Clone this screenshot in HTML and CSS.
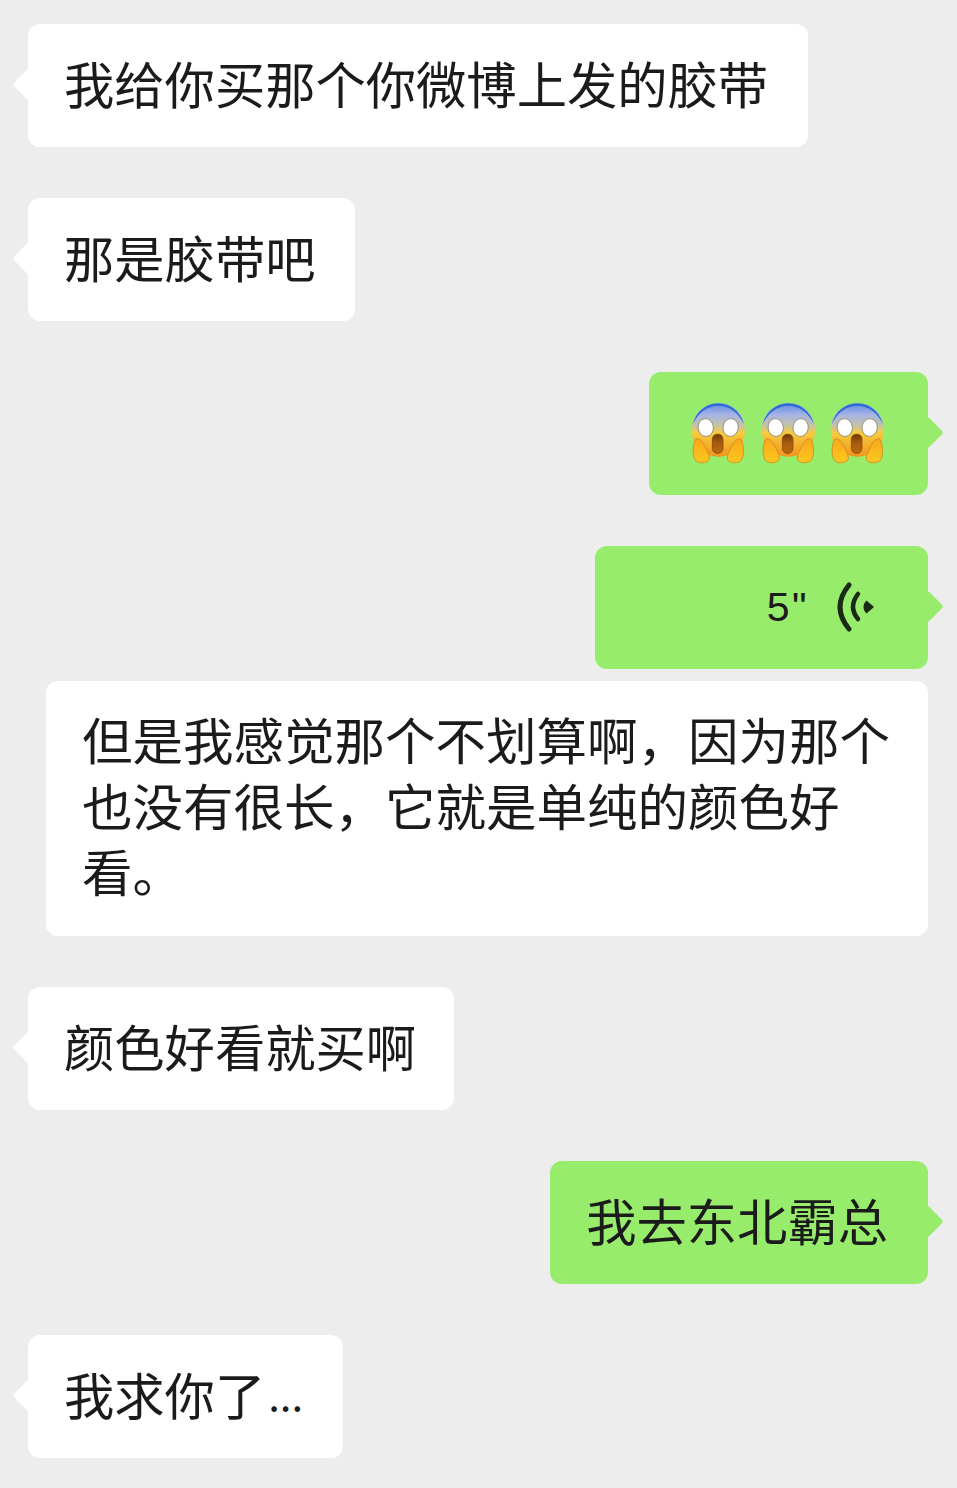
FILE: index.html
```html
<!DOCTYPE html>
<html lang="zh-CN">
<head>
  <meta charset="UTF-8">
  <title>聊天记录</title>
  <link rel="stylesheet" href="styles.css">
</head>
<body>
  <svg class="defs" width="0" height="0">
    <defs>
      <linearGradient id="face" x1="0" y1="0" x2="0" y2="1">
        <stop offset="0" stop-color="#5f86e2"/>
        <stop offset="0.22" stop-color="#a6b4e6"/>
        <stop offset="0.42" stop-color="#c4c3a6"/>
        <stop offset="0.56" stop-color="#f6cb3e"/>
        <stop offset="1" stop-color="#f2941c"/>
      </linearGradient>
      <linearGradient id="hand" x1="0" y1="0" x2="0" y2="1">
        <stop offset="0" stop-color="#f7a81e"/>
        <stop offset="1" stop-color="#fdc81e"/>
      </linearGradient>
      <linearGradient id="mouth" x1="0" y1="0" x2="0" y2="1">
        <stop offset="0" stop-color="#6f3a08"/>
        <stop offset="0.45" stop-color="#a85a10"/>
        <stop offset="1" stop-color="#b8690f"/>
      </linearGradient>
      <!-- drawn at 3x, same scale as the zoomed crop -->
      <symbol id="scream" viewBox="18 20 174 190">
        <circle cx="103" cy="107" r="81" fill="url(#face)"/>
        <path d="M26 90C36 50 68 28 103 28C138 28 170 50 180 90C166 58 138 34 103 34C68 34 40 58 26 90z" fill="#2a6ad2"/>
        <ellipse cx="65" cy="100" rx="23" ry="27" fill="#fff" stroke="#8c8474" stroke-width="2.5" transform="rotate(-8 65 100)"/>
        <ellipse cx="140" cy="100" rx="23" ry="27" fill="#fff" stroke="#8c8474" stroke-width="2.5" transform="rotate(8 140 100)"/>
        <rect x="85" y="120" width="32" height="58" rx="15" fill="url(#mouth)" stroke="#8a4a0a" stroke-width="2.5"/>
        <path d="M34 136C25 154 24 184 34 199C42 209 68 209 75 197C79 187 70 172 64 160C58 146 46 128 34 136z" fill="url(#hand)" stroke="#d0861a" stroke-width="2.5"/>
        <path d="M172 136C181 154 182 184 172 199C164 209 138 209 131 197C127 187 136 172 142 160C148 146 160 128 172 136z" fill="url(#hand)" stroke="#d0861a" stroke-width="2.5"/>
      </symbol>
    </defs>
  </svg>

  <div class="chat">
    <div class="bubble them">我给你买那个你微博上发的胶带</div>
    <div class="bubble them">那是胶带吧</div>
    <div class="bubble me emojis">
      <svg class="emoji"><use href="#scream"/></svg>
      <svg class="emoji"><use href="#scream"/></svg>
      <svg class="emoji"><use href="#scream"/></svg>
    </div>
    <div class="voice-group">
      <div class="bubble me voice">
        <span class="secs">5"</span>
        <svg class="wave" width="38" height="50" viewBox="0 0 38 50">
          <path d="M12 3Q-6 25 12 47" fill="none" stroke="#1a2a14" stroke-width="5" stroke-linecap="round"/>
          <path d="M21 12Q11 25 21 37" fill="none" stroke="#1a2a14" stroke-width="4.5" stroke-linecap="round"/>
          <path d="M29.5 18.5L37 25L29.5 31.5C25.5 28 25.5 22 29.5 18.5z" fill="#1a2a14"/>
        </svg>
      </div>
      <div class="translation">但是我感觉那个不划算啊，因为那个也没有很长，它就是单纯的颜色好看。</div>
    </div>
    <div class="bubble them tight">颜色好看就买啊</div>
    <div class="bubble me">我去东北霸总</div>
    <div class="bubble them">我求你了<span class="dots">...</span></div>
  </div>
</body>
</html>
```

FILE: styles.css
```css
* {
  margin: 0;
  padding: 0;
  box-sizing: border-box;
}
html, body {
  height: 100%;
}
body {
  background-color: #ededed;
  color: #1b1b1b;
  font-family: "Noto Sans CJK SC", "Liberation Sans", sans-serif;
  font-size: 50.3px;
  overflow: hidden;
}
.defs {
  display: block;
}
.chat {
  display: flex;
  flex-direction: column;
  gap: 51px;
  padding: 24px 29px 0 28px;
}
.bubble {
  position: relative;
  height: 123px;
  padding: 0 40px 8px 36px;
  border-radius: 12px;
  display: flex;
  align-items: center;
  line-height: 66px;
  white-space: nowrap;
}
.bubble::before {
  content: "";
  position: absolute;
  top: 50%;
  width: 23px;
  height: 23px;
  margin-top: -13px;
  border-radius: 3px;
  background-color: inherit;
  transform: rotate(45deg);
}
.them {
  align-self: flex-start;
  background-color: #fff;
}
.them::before {
  left: -11px;
}
.me {
  align-self: flex-end;
  background-color: #98ec6c;
}
.me::before {
  right: -11px;
}
.tight {
  padding-right: 38px;
}
.emojis {
  width: 279px;
  padding: 0 41px 2px;
  justify-content: space-between;
}
.emoji {
  width: 58px;
  height: 63px;
  flex: none;
}
.dots {
  padding-left: 3px;
  font-size: 42px;
}
.voice-group {
  display: flex;
  flex-direction: column;
  gap: 12px;
}
.voice {
  width: 333px;
  padding: 0 53px 2px 0;
  justify-content: flex-end;
  gap: 28px;
}
.secs {
  font-family: "Liberation Sans", sans-serif;
  font-size: 41px;
  letter-spacing: 2.5px;
}
.wave {
  flex: none;
}
.translation {
  margin-left: 18px;
  padding: 24px 36px 33px;
  border-radius: 12px;
  background-color: #fff;
  font-size: 50.5px;
  line-height: 66px;
}
```
